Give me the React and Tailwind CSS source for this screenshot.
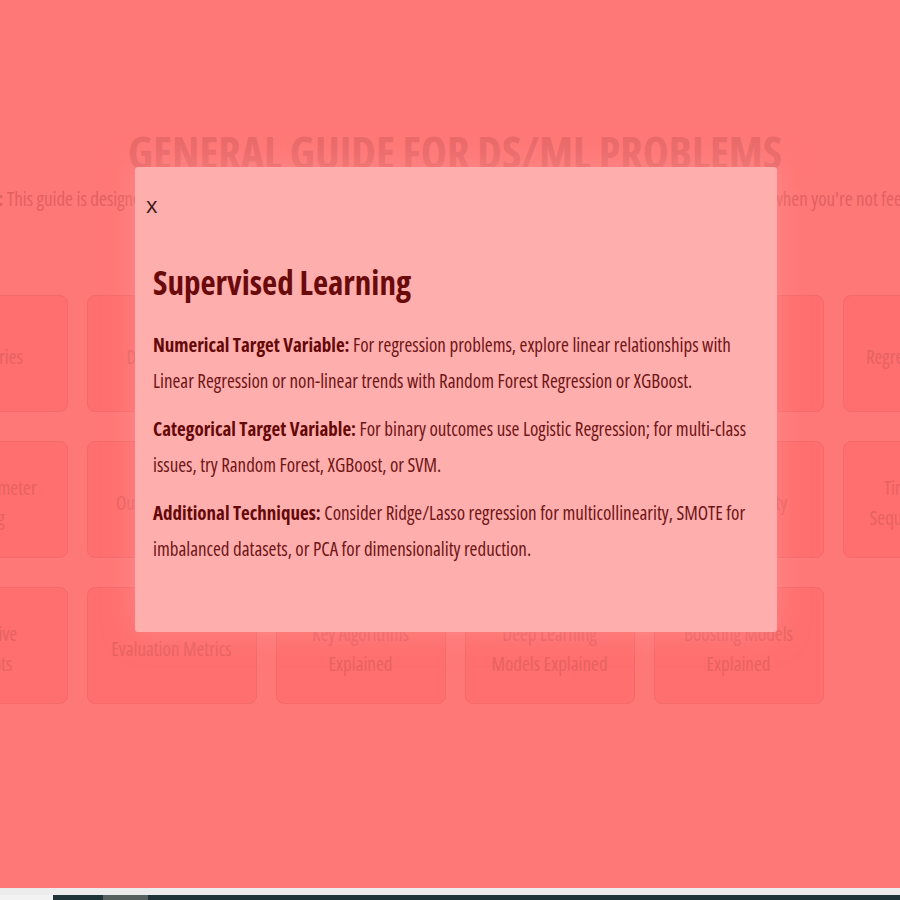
import React from "react";

function Card({ children }) {
  return (
    <div className="flex h-[117px] items-center justify-center rounded-[8px] border border-[#f46a6a] bg-[#ff6f6f] px-3 pt-[6px] text-center text-[19px] leading-[30px] text-[#e76262]">
      <div>{children}</div>
    </div>
  );
}

export default function App() {
  const cards = [
    "ML Libraries", "Data Cleaning", "Feature Engineering", "Model Selection", "Clustering", "Regression Models",
    <>Hyperparameter<br />Tuning</>, "Outlier Detection", "Cross Validation", "Deep Learning", "Dimensionality", <>Time Series &amp;<br />Sequence Models</>,
    <>Exhaustive<br />Concepts</>, "Evaluation Metrics", <>Key Algorithms<br />Explained</>, <>Deep Learning<br />Models Explained</>, <>Boosting Models<br />Explained</>,
  ];
  return (
    <div className="relative h-[900px] w-[900px] overflow-hidden bg-[#ff7878] font-['Open_Sans',sans-serif] [font-stretch:75%]">
      <div className="flex h-[888px] flex-col items-center pl-[10px] pt-[128px]">
        <h1 className="whitespace-nowrap text-[44px] font-bold leading-[48px] text-[#ea6a6a]">
          GENERAL GUIDE FOR DS/ML PROBLEMS
        </h1>
        <p className="ml-[48px] mt-[11px] whitespace-nowrap text-[19px] leading-[24px] text-[#e26060]">
          <span className="font-bold">Note:</span> This guide is designed to help you navigate data science and machine learning (ML) problems step by step, especially when you're not feeling confident.
        </p>
        <div className="mt-[84px] grid w-[1115px] shrink-0 grid-cols-[repeat(6,170px)] gap-x-[19px] gap-y-[29px]">
          {cards.map((c, i) => (
            <Card key={i}>{c}</Card>
          ))}
        </div>
      </div>
      <div className="absolute bottom-0 left-0 flex h-[12px] w-full flex-col">
        <div className="h-[7px] bg-[#ececec]" />
        <div className="flex h-[5px]">
          <div className="w-[53px] bg-[#f2f2f2]" />
          <div className="w-[50px] bg-[#1f3438]" />
          <div className="w-[45px] bg-[#56605f]" />
          <div className="flex-1 bg-[#1f3438]" />
        </div>
      </div>
      <div className="absolute left-[135px] top-[167px] h-[465px] w-[642px] rounded-[3px] bg-[#ffaeae] px-[18px] pt-[26px] shadow-[0_0_30px_rgba(255,150,150,0.6)]">
        <button className="-ml-[7px] block text-[22px] leading-[22px] text-[#3b1616] [font-stretch:100%]">x</button>
        <h2 className="mt-[48px] text-[33px] font-bold leading-[40px] text-[#6a0a0a]">Supervised Learning</h2>
        <div className="mt-[25px] flex flex-col gap-[13px] text-[19px] leading-[35.5px] text-[#6e1515]">
          <p><span className="font-bold text-[#640808]">Numerical Target Variable:</span> For regression problems, explore linear relationships with Linear Regression or non-linear trends with Random Forest Regression or XGBoost.</p>
          <p><span className="font-bold text-[#640808]">Categorical Target Variable:</span> For binary outcomes use Logistic Regression; for multi-class issues, try Random Forest, XGBoost, or SVM.</p>
          <p><span className="font-bold text-[#640808]">Additional Techniques:</span> Consider Ridge/Lasso regression for multicollinearity, SMOTE for imbalanced datasets, or PCA for dimensionality reduction.</p>
        </div>
      </div>
    </div>
  );
}
